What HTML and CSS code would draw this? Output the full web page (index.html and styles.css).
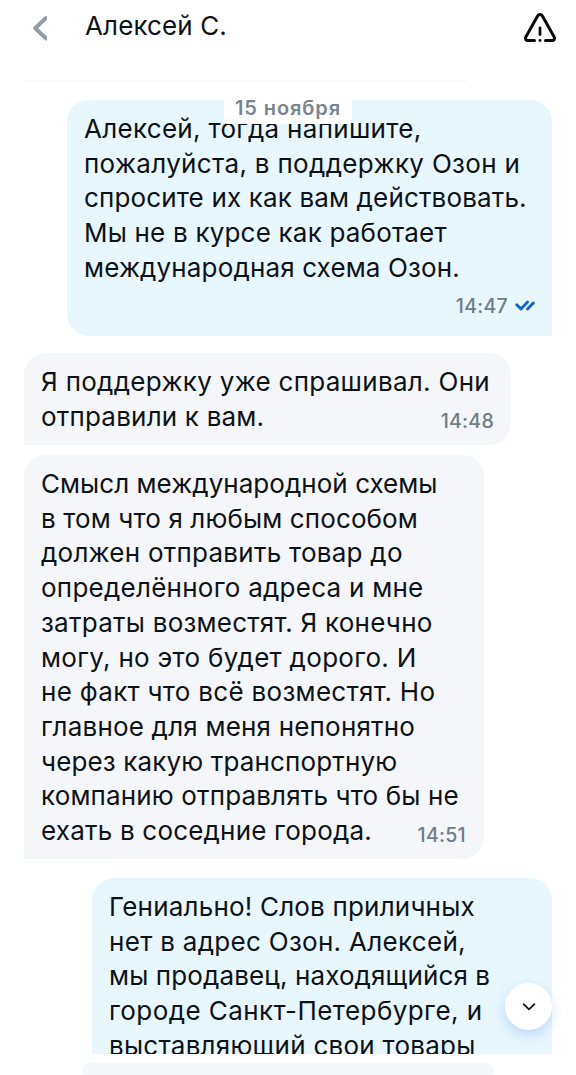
FILE: index.html
```
<!DOCTYPE html>
<html lang="ru">
<head>
<meta charset="utf-8">
<title>Алексей С.</title>
<link rel="stylesheet" href="styles.css">
</head>
<body>
<div class="app">
  <header class="header">
    <svg class="back" width="15" height="26" viewBox="0 0 15 26" fill="none"><path d="M14 3 3.200 13.200 14 23.400" stroke="#929ba7" stroke-width="4" stroke-linecap="round" stroke-linejoin="round"/></svg>
    <h1 class="name t10">Алексей С.</h1>
    <svg class="warn" width="34" height="32" viewBox="0 0 34 32" fill="none" stroke="#0b0c0e" stroke-width="3" stroke-linecap="round" stroke-linejoin="round"><path d="M11.500 28.500H5c-2.200 0-3.300-1.800-2.200-3.600L14.600 4c1-1.900 3.800-1.900 4.800 0l11.800 20.900c1.100 1.800 0 3.600-2.200 3.600H22.500"/><path d="M17 16v6.500" stroke-width="2.800"/><path d="M17 28.500h.01" stroke-width="2.900"/></svg>
  </header>
  <main class="chat">
    <div class="date">15 ноября</div>
    <article class="bubble out first">
      <p class="line t30">Алексей, тогда напишите,</p>
      <p class="line t35">пожалуйста, в поддержку Озон и</p>
      <p class="line t15">спросите их как вам действовать.</p>
      <p class="line t20">Мы не в курсе как работает</p>
      <p class="line t15">международная схема Озон.</p>
      <div class="meta"><time>14:47</time><svg width="20" height="13" viewBox="0 0 20 13" fill="none" stroke="#1763c6" stroke-width="2.900" stroke-linecap="round" stroke-linejoin="round"><path d="M1.700 5.700 6 10 12.500 3M12.500 10 18.300 4"/></svg></div>
    </article>
    <article class="bubble in second">
      <p class="line t30">Я поддержку уже спрашивал. Они</p>
      <p class="line t20">отправили к вам.</p>
      <time class="stamp">14:48</time>
    </article>
    <article class="bubble in third">
      <p class="line t05">Смысл международной схемы</p>
      <p class="line t10">в том что я любым способом</p>
      <p class="line t25">должен отправить товар до</p>
      <p class="line t25">определённого адреса и мне</p>
      <p class="line t25">затраты возместят. Я конечно</p>
      <p class="line t30">могу, но это будет дорого. И</p>
      <p class="line t30">не факт что всё возместят. Но</p>
      <p class="line t20">главное для меня непонятно</p>
      <p class="line t15">через какую транспортную</p>
      <p class="line t15">компанию отправлять что бы не</p>
      <p class="line t20">ехать в соседние города.</p>
      <time class="stamp">14:51</time>
    </article>
    <article class="bubble out fourth">
      <p class="line t20">Гениально! Слов приличных</p>
      <p class="line t30">нет в адрес Озон. Алексей,</p>
      <p class="line t10">мы продавец, находящийся в</p>
      <p class="line t40">городе Санкт-Петербурге, и</p>
      <p class="line t25">выставляющий свои товары</p>
    </article>
    <button class="down" aria-label="Вниз"><svg width="16" height="10" viewBox="0 0 16 10" fill="none"><path d="M2.600 2.200 8 7.400 13.400 2.200" stroke="#15181b" stroke-width="1.800" stroke-linecap="round" stroke-linejoin="round"/></svg></button>
  </main>
  <footer class="composer"><div class="field"></div></footer>
</div>
</body>
</html>
```
FILE: styles.css
```
* { box-sizing: border-box; }
body {
  margin: 0;
  background: #fff;
  color: #0d1216;
  font: 400 26px/34.7px Inter, "Liberation Sans", sans-serif;
}
.app {
  display: flex;
  flex-direction: column;
  width: 576px;
  height: 1075px;
  overflow: hidden;
}
.header {
  flex: none;
  display: flex;
  align-items: flex-start;
  height: 82px;
  padding: 0 19px 0 32px;
  background: linear-gradient(#f9f9fc, #f9f9fc) 24px 80px / 443px 2px no-repeat;
}
.back { margin-top: 15px; }
.name {
  flex: 1;
  margin: 9px 0 0 38px;
  font-size: 26px;
  font-weight: 400;
}
.warn { margin-top: 12px; }

.chat {
  flex: none;
  position: relative;
  display: flex;
  flex-direction: column;
  align-items: flex-start;
  height: 972px;
  padding: 18px 24px 0;
  overflow: hidden;
}
.date {
  position: absolute;
  z-index: 1;
  left: 224px;
  top: 12px;
  width: 128px;
  height: 30px;
  border-radius: 4px;
  background: #fff;
  color: #79858e;
  font-size: 20px;
  font-weight: 600;
  line-height: 28px;
  letter-spacing: .9px;
  text-align: center;
  white-space: nowrap;
}
.bubble {
  flex: none;
  position: relative;
  padding: 12px 17px 0;
}
.line { margin: 0; white-space: nowrap; }
.out {
  align-self: flex-end;
  background: #e8f6fe;
  border-radius: 22px 22px 0 22px;
}
.in {
  background: #f5f6fa;
  border-radius: 22px 22px 22px 0;
}
.first { width: 485px; height: 236px; margin-bottom: 17px; }
.second { width: 487px; height: 92px; margin-bottom: 10px; }
.third { width: 460px; height: 404px; margin-bottom: 19px; }
.fourth { width: 460px; height: 230px; }

.meta, .stamp {
  color: #6d7d88;
  font-size: 19.5px;
  font-weight: 500;
  line-height: 24px;
  letter-spacing: .3px;
}
.meta {
  display: flex;
  justify-content: flex-end;
  align-items: center;
  gap: 7px;
  margin-top: 8px;
}
.stamp {
  position: absolute;
  right: 17px;
  bottom: 12px;
}
.third .stamp { right: 18px; }
.down {
  position: absolute;
  right: 24px;
  bottom: 24px;
  display: grid;
  place-items: center;
  width: 47px;
  height: 47px;
  padding: 0;
  border: 0;
  border-radius: 50%;
  background: #fff;
  box-shadow: 0 5px 12px rgba(60, 120, 225, .24);
}
.composer { flex: none; height: 21px; padding: 9px 83px 0; }
.field {
  height: 30px;
  border-radius: 6px 6px 0 0;
  background: #f6f7fb;
}

.t05 { letter-spacing: .04px; }
.t10 { letter-spacing: .12px; }
.t15 { letter-spacing: .15px; }
.t20 { letter-spacing: .2px; }
.t25 { letter-spacing: .25px; }
.t30 { letter-spacing: .3px; }
.t35 { letter-spacing: .33px; }
.t40 { letter-spacing: .43px; }
```
